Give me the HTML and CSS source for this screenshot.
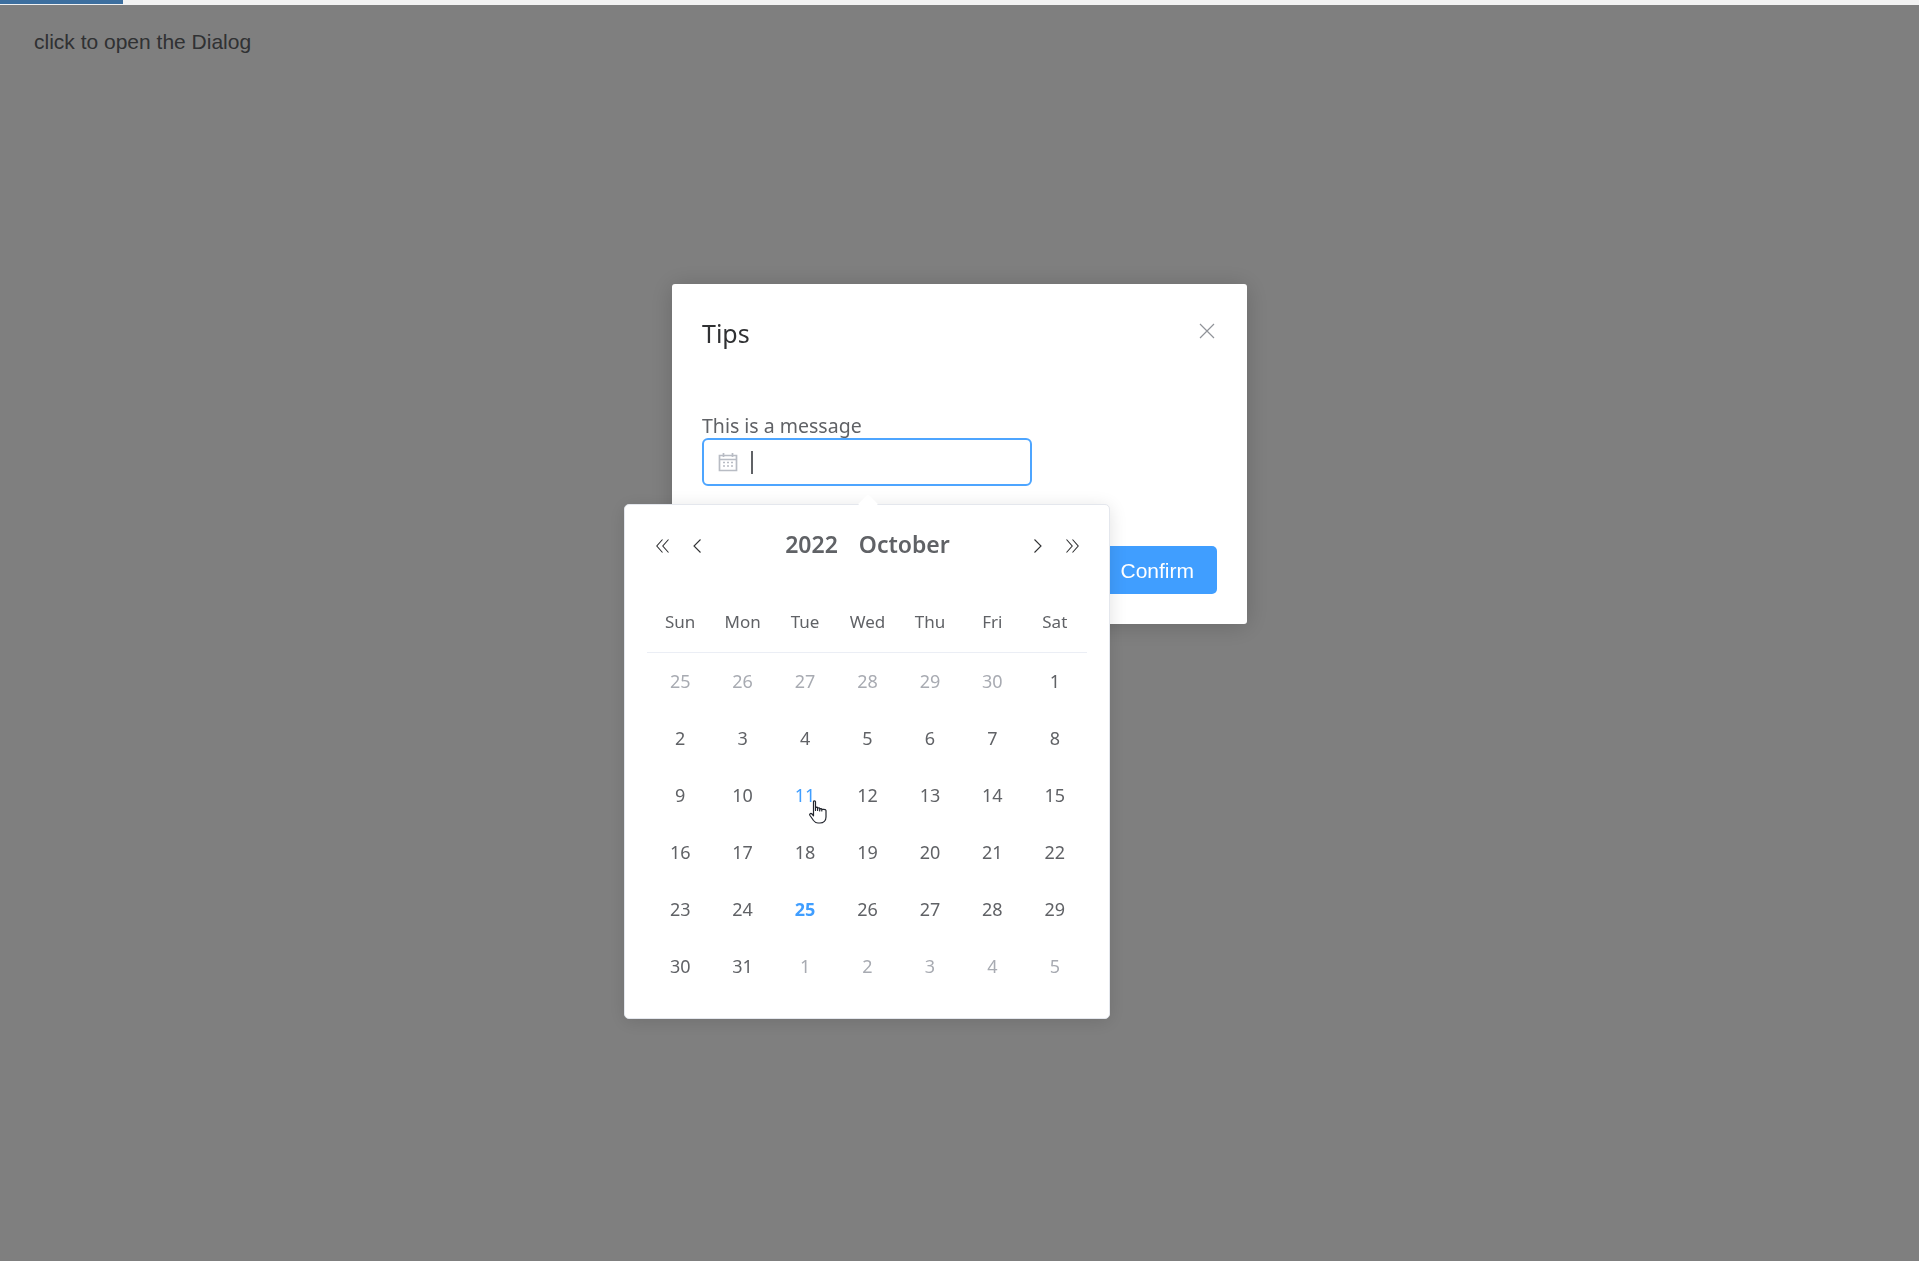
FILE: index.html
```html
<!DOCTYPE html>
<html lang="en">
<head>
    <meta charset="UTF-8">
    <title>Dialog</title>
    <link rel="stylesheet" href="styles.css">
</head>
<body>
    <div class="progress"><div class="progress-bar"></div></div>
    <p class="open-link">click to open the Dialog</p>

    <div class="mask">
        <div class="dialog">
            <div class="dialog-header">
                <span class="dialog-title">Tips</span>
                <svg class="dialog-close" viewBox="0 0 16 16" width="16" height="16">
                    <path d="M1 1L15 15M15 1L1 15" fill="none" stroke="#909399" stroke-width="1.2"/>
                </svg>
            </div>

            <div class="dialog-body">
                <div class="message">This is a message</div>
                <div class="date-input">
                    <svg class="date-icon" viewBox="0 0 20 20" width="20" height="20">
                        <path d="M1.5 3.5H18.5V18.5H1.5ZM1.5 7.5H18.5M5.5 1V5M14.5 1V5" fill="none" stroke="#b8bcc4" stroke-width="1.7"/>
                        <path d="M5 10.500H7M9 10.500H11M13 10.500H15M5 14H7M9 14H11M13 14H15" fill="none" stroke="#b8bcc4" stroke-width="1.6"/>
                    </svg>
                    <span class="caret"></span>

                    <div class="date-panel">
                        <div class="panel-arrow"></div>
                        <div class="panel-header">
                            <div class="panel-nav">
                                <svg viewBox="0 0 13 14" width="13" height="14"><path d="M6.5 0.5L0.8 7L6.5 13.500M12.500 0.5L6.8 7L12.500 13.500" fill="none" stroke="#303133" stroke-width="1.1"/></svg>
                                <svg viewBox="0 0 8 14" width="8" height="14"><path d="M7.500 0.5L1 7L7.500 13.500" fill="none" stroke="#303133" stroke-width="1.1"/></svg>
                            </div>
                            <div class="panel-title"><span>2022</span><span>October</span></div>
                            <div class="panel-nav">
                                <svg viewBox="0 0 8 14" width="8" height="14"><path d="M0.5 0.5L7 7L0.5 13.500" fill="none" stroke="#303133" stroke-width="1.1"/></svg>
                                <svg viewBox="0 0 13 14" width="13" height="14"><path d="M0.5 0.5L6.200 7L0.5 13.500M6.500 0.5L12.200 7L6.500 13.500" fill="none" stroke="#303133" stroke-width="1.1"/></svg>
                            </div>
                        </div>

                        <div class="week-row">
                            <span>Sun</span><span>Mon</span><span>Tue</span><span>Wed</span><span>Thu</span><span>Fri</span><span>Sat</span>
                        </div>

                        <div class="day-grid">
                            <span class="muted">25</span><span class="muted">26</span><span class="muted">27</span><span class="muted">28</span><span class="muted">29</span><span class="muted">30</span><span>1</span>
                            <span>2</span><span>3</span><span>4</span><span>5</span><span>6</span><span>7</span><span>8</span>
                            <span>9</span><span>10</span><span class="hover">11</span><span>12</span><span>13</span><span>14</span><span>15</span>
                            <span>16</span><span>17</span><span>18</span><span>19</span><span>20</span><span>21</span><span>22</span>
                            <span>23</span><span>24</span><span class="today">25</span><span>26</span><span>27</span><span>28</span><span>29</span>
                            <span>30</span><span>31</span><span class="muted">1</span><span class="muted">2</span><span class="muted">3</span><span class="muted">4</span><span class="muted">5</span>
                        </div>
                    </div>
                </div>
            </div>

            <div class="dialog-footer">
                <button class="confirm">Confirm</button>
            </div>
        </div>

        <!-- mouse pointer sitting on the hovered day -->
        <svg class="pointer" viewBox="0 0 18 24" width="18" height="24">
            <path d="M4.500 1.800C4.500 0.500 6.500 0.500 6.500 1.800V10.500V8C6.500 6.900 8.600 6.900 8.600 8V10.500V8.600C8.600 7.500 10.700 7.500 10.700 8.600V11V9.400C10.700 8.300 12.800 8.300 12.800 9.400V11V10C12.800 9 17 9 17 10.500V17C17 20.500 14.500 23 11 23H9C6.500 23 5.500 21.800 4.500 20.500L1 15.500C0 14 1.800 12.600 3 14L4.500 15.800Z" fill="#fff" stroke="#22252d" stroke-width="1.200" stroke-linejoin="round"/>
        </svg>
    </div>
</body>
</html>
```

FILE: styles.css
```css
body {
    margin: 0;
    background: #fff;
    font-family: "Liberation Sans", Arial, sans-serif;
    color: #606266;
}

.progress {
    position: relative;
    z-index: 3;
    height: 5px;
    background: #f2f2f2;
}

.progress-bar {
    width: 123px;
    height: 4px;
    background: #3d6f9f;
}

.open-link {
    margin: 0;
    padding: 23px 0 0 34px;
    font-size: 21px;
    line-height: 28px;
}

.mask {
    position: fixed;
    top: 0;
    left: 0;
    right: 0;
    bottom: 0;
    z-index: 2;
    background: rgba(0, 0, 0, 0.5);
}

.dialog {
    width: 575px;
    height: 340px;
    box-sizing: border-box;
    margin: 284px 0 0 672px;
    padding: 30px;
    background: #fff;
    border-radius: 3px;
    box-shadow: 0 2px 24px rgba(0, 0, 0, 0.18);
    font-family: "Noto Sans", "Open Sans", sans-serif;
}

.dialog-header {
    display: flex;
    justify-content: space-between;
    align-items: center;
    height: 36px;
}

.dialog-title {
    margin-top: 2px;
    font-size: 25px;
    line-height: 36px;
    color: #303133;
}

.dialog-close {
    margin: 0 2px 3px 0;
}

.dialog-body {
    padding-top: 62px;
}

.message {
    margin-top: 1px;
    font-size: 19.500px;
    line-height: 25px;
}

.date-input {
    position: relative;
    display: flex;
    align-items: center;
    gap: 13px;
    width: 330px;
    height: 48px;
    box-sizing: border-box;
    padding-left: 14px;
    border: 2px solid #4da5ff;
    border-radius: 6px;
}

.caret {
    width: 2px;
    height: 23px;
    background: #606266;
}

.date-panel {
    position: absolute;
    top: 64px;
    left: -80px;
    z-index: 1;
    width: 486px;
    height: 515px;
    box-sizing: border-box;
    padding: 17px 22px 0;
    background: #fff;
    border: 1px solid #e4e7ed;
    border-radius: 5px;
    box-shadow: 0 3px 18px rgba(0, 0, 0, 0.12);
}

.panel-arrow {
    position: absolute;
    top: -8px;
    left: 236px;
    width: 14px;
    height: 14px;
    background: #fff;
    border-radius: 2px 0 0 0;
    transform: rotate(45deg);
}

.panel-header {
    display: flex;
    justify-content: space-between;
    align-items: center;
    height: 44px;
    padding: 0 8px 0 9px;
    color: #606266;
}

.panel-nav {
    display: flex;
    align-items: center;
    gap: 24px;
    margin-top: 3px;
}

.panel-title {
    display: flex;
    gap: 21px;
    font-size: 23px;
    font-weight: 600;
}

.week-row,
.day-grid {
    display: grid;
    grid-template-columns: repeat(7, 1fr);
    padding: 0 1px 0 2px;
    text-align: center;
    font-size: 18px;
}

.week-row {
    margin-top: 26px;
    font-size: 17px;
    line-height: 60px;
    border-bottom: 1px solid #ebeef5;
}

.week-row span {
    height: 60px;
}

.day-grid span {
    line-height: 57px;
}

.day-grid .muted {
    color: #a8abb2;
}

.day-grid .hover {
    color: #409eff;
}

.day-grid .today {
    color: #409eff;
    font-weight: 700;
}

.dialog-footer {
    display: flex;
    justify-content: flex-end;
    margin-top: 60px;
}

.confirm {
    width: 170px;
    height: 48px;
    padding: 1px 23px 0;
    text-align: right;
    border: none;
    border-radius: 5px;
    background: #409eff;
    color: #fff;
    font-family: "Liberation Sans", Arial, sans-serif;
    font-size: 21px;
}

.pointer {
    position: absolute;
    top: 800px;
    left: 809px;
    z-index: 2;
}
```
